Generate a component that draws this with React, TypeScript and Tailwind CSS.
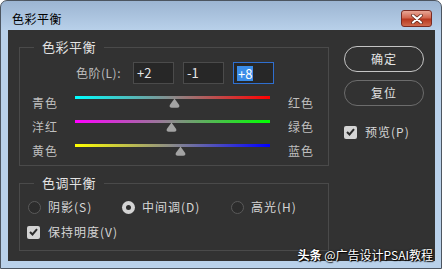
import React from 'react';

type Slider = { left: string; right: string; from: string; to: string; value: number };

const sliders: Slider[] = [
  { left: '青色', right: '红色', from: '#00ffff', to: '#ff0000', value: 2 },
  { left: '洋红', right: '绿色', from: '#ff00ff', to: '#00ff00', value: -1 },
  { left: '黄色', right: '蓝色', from: '#ffff00', to: '#0000ff', value: 8 },
];

const Thumb = () => (
  <svg width="11" height="10" viewBox="0 0 11 10">
    <path d="M5.5 0.5 L10.2 7 Q11 9.8 8.2 9.8 L2.8 9.8 Q0 9.8 0.8 7 Z" fill="#a3a3a3" />
  </svg>
);

const Check = () => (
  <span className="flex h-[13px] w-[13px] items-center justify-center rounded-[2px] bg-[#d4d4d4]">
    <svg width="9" height="8" viewBox="0 0 9 8">
      <path d="M1 4 L3.5 6.5 L8 1.2" stroke="#2b2b2b" strokeWidth="2" fill="none" />
    </svg>
  </span>
);

const Radio = ({ on }: { on?: boolean }) =>
  on ? (
    <span className="flex h-[13px] w-[13px] items-center justify-center rounded-full bg-[#d4d4d4]">
      <span className="h-[5px] w-[5px] rounded-full bg-[#2e2e2e]" />
    </span>
  ) : (
    <span className="h-[13px] w-[13px] rounded-full border border-[#5a5a5a] bg-[#2c2c2c]" />
  );

export default function App() {
  return (
    <div className="h-[269px] w-[442px] overflow-hidden rounded-t-[7px] border border-[#4c5560] bg-[linear-gradient(#9cb5d2,#b9d1ea_30px,#b9d1ea)] font-['Noto_Sans_CJK_SC',sans-serif]">
      {/* title bar */}
      <div className="flex h-[29px] items-start justify-between">
        <span className="ml-[11px] mt-[10px] text-[12px] leading-[16px] tracking-[0.5px] text-black">色彩平衡</span>
        <div className="mr-[9px] mt-[9px] flex h-[17px] w-[31px] items-center justify-center rounded-[3px] border border-[#7a2b22] bg-[linear-gradient(#e9a796,#d2674f_45%,#b8381f_55%,#d06a4d)]">
          <svg width="12" height="10" viewBox="0 0 12 10">
            <path d="M2 1.5 L10 8.5 M10 1.5 L2 8.5" stroke="#5a2418" strokeWidth="3.6" strokeLinecap="round" />
            <path d="M2 1.5 L10 8.5 M10 1.5 L2 8.5" stroke="#ffffff" strokeWidth="2.2" strokeLinecap="round" />
          </svg>
        </div>
      </div>

      {/* body */}
      <div className="relative ml-[7px] flex h-[231px] w-[427px] gap-[15px] bg-[#323232] pl-[11px]">
        <div className="w-[310px]">
          {/* 色彩平衡 group */}
          <div className="mt-[17px] h-[119px] border border-[#4a4a4a]">
            <span className="-mt-[9px] ml-[14px] block w-fit bg-[#323232] px-[8px] text-[13px] leading-[16px] tracking-[0.5px] text-[#e2e2e2]">
              色彩平衡
            </span>
            <div className="ml-[56px] mt-[7px] flex items-center">
              <span className="w-[57px] text-[12px] leading-[16px] tracking-[0.5px] text-[#bdbdbd]">色阶(L):</span>
              <div className="flex gap-[9px]">
                <div className="flex h-[22px] w-[41px] items-center border border-[#4b4b4b] bg-[#272727] pl-[3px] text-[13px] text-[#e6e6e6]">+2</div>
                <div className="flex h-[22px] w-[41px] items-center border border-[#4b4b4b] bg-[#272727] pl-[3px] text-[13px] text-[#e6e6e6]">-1</div>
                <div className="flex h-[22px] w-[41px] items-center border border-[#2f6fd0] bg-[#272727] pl-[3px] text-[13px] text-white">
                  <span className="bg-[#3b8de8] px-[1px] leading-[15px]">+8</span>
                </div>
              </div>
            </div>
            <div className="mt-[12px] flex flex-col">
              {sliders.map((s) => {
                const pct = (s.value + 100) / 2;
                return (
                  <div key={s.left} className="flex h-[24px] items-start pl-[12px]">
                    <span className="-mt-[1px] w-[43px] text-[12px] leading-[16px] tracking-[1px] text-[#bfbfbf]">{s.left}</span>
                    <div className="relative h-[13px] w-[195px]">
                      <div
                        className="h-[3px] w-full"
                        style={{ background: `linear-gradient(to right, ${s.from}, #8a8a8a 50%, ${s.to})` }}
                      />
                      <div className="absolute top-[2px]" style={{ left: `calc(${pct}% - 5.5px)` }}>
                        <Thumb />
                      </div>
                    </div>
                    <span className="-mt-[1px] ml-[18px] text-[12px] leading-[16px] tracking-[1px] text-[#bfbfbf]">{s.right}</span>
                  </div>
                );
              })}
            </div>
          </div>

          {/* 色调平衡 group */}
          <div className="mt-[17px] h-[68px] border border-[#4a4a4a]">
            <span className="-mt-[9px] ml-[14px] block w-fit bg-[#323232] px-[8px] text-[13px] leading-[16px] tracking-[0.5px] text-[#e2e2e2]">
              色调平衡
            </span>
            <div className="mt-[8px] flex h-[16px] items-center pl-[8px] text-[12px] leading-[16px] tracking-[1px] text-[#d6d6d6]">
              <div className="flex w-[94px] items-center gap-[7px]">
                <Radio />
                <span>阴影(S)</span>
              </div>
              <div className="flex w-[109px] items-center gap-[7px]">
                <Radio on />
                <span>中间调(D)</span>
              </div>
              <div className="flex items-center gap-[7px]">
                <Radio />
                <span>高光(H)</span>
              </div>
            </div>
            <div className="mt-[9px] flex h-[16px] items-center gap-[8px] pl-[7px] text-[12px] leading-[16px] tracking-[1px] text-[#d6d6d6]">
              <Check />
              <span>保持明度(V)</span>
            </div>
          </div>
        </div>

        {/* right column */}
        <div className="flex w-[80px] flex-col pt-[16px]">
          <button className="h-[26px] w-[80px] rounded-full border-[1.5px] border-[#c4c4c4] text-[12px] tracking-[1px] text-[#e4e4e4]">确定</button>
          <button className="mt-[8px] h-[26px] w-[80px] rounded-full border-[1.5px] border-[#6c6c6c] text-[12px] tracking-[1px] text-[#e0e0e0]">复位</button>
          <div className="mt-[18px] flex items-center gap-[8px] text-[12px] leading-[16px] tracking-[1px] text-[#d6d6d6]">
            <Check />
            <span>预览(P)</span>
          </div>
        </div>

        {/* watermark */}
        <div className="absolute bottom-[-1px] right-[2px] text-[12px] leading-[14px] text-white [text-shadow:0_0_2px_#000,1px_1px_1px_#000]">
          <span className="font-bold">头条</span> @广告设计PSAI教程
        </div>
      </div>
    </div>
  );
}
